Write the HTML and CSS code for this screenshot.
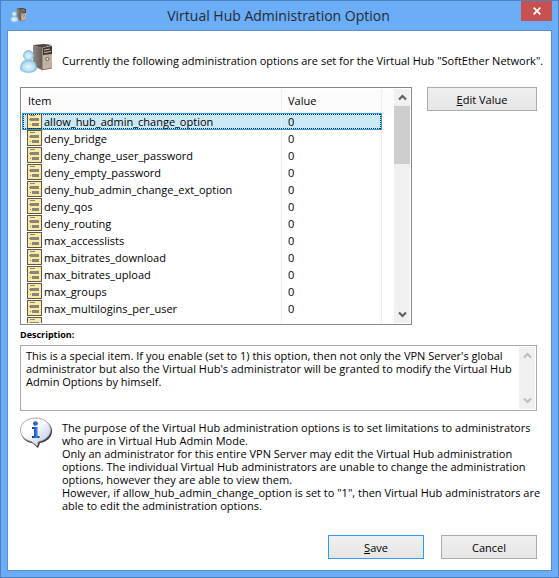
FILE: index.html
```html
<!DOCTYPE html>
<html lang="en">
<head>
  <meta charset="UTF-8">
  <meta name="viewport" content="width=device-width, initial-scale=1.0">
  <title>Virtual Hub Administration Option</title>
  <link rel="stylesheet" href="styles.css">
</head>
<body>
  <!-- shared icons -->
  <svg class="sprite" aria-hidden="true">
    <defs>
      <radialGradient id="person-fill" cx="0.5" cy="0.55" r="0.6">
        <stop offset="0" stop-color="#e2f5fd"/>
        <stop offset="0.5" stop-color="#bfe3f5"/>
        <stop offset="1" stop-color="#7fb9dd"/>
      </radialGradient>
      <linearGradient id="tower-side" x1="0" y1="0" x2="1" y2="0">
        <stop offset="0" stop-color="#948a84"/>
        <stop offset="1" stop-color="#665c57"/>
      </linearGradient>
      <linearGradient id="bubble-fill" x1="0" y1="0" x2="1" y2="1">
        <stop offset="0.4" stop-color="#ffffff"/>
        <stop offset="1" stop-color="#b4bfe8"/>
      </linearGradient>
      <linearGradient id="info-fill" x1="0" y1="0" x2="1" y2="0">
        <stop offset="0" stop-color="#0c2f86"/>
        <stop offset="0.6" stop-color="#2f83e8"/>
        <stop offset="1" stop-color="#0c3c9c"/>
      </linearGradient>
      <symbol id="icon-user-server" viewBox="0 0 32 32">
        <path d="M13 1 L22 4 V26 L13 22 Z" fill="url(#tower-side)"/>
        <path d="M13 1 L24 0 L32 1 L22 4 Z" fill="#4b423e"/>
        <path d="M22 4 L32 1 V24 L22 26 Z" fill="#c3b1a0"/>
        <path d="M23 4 L32 2 V10 L23 11 Z" fill="#3b3430"/>
        <path d="M24 6 L30 5 M24 8.5 L31 7.5" stroke="#c8beb6" stroke-width="1"/>
        <path d="M22 4 V26 L32 24" fill="none" stroke="#6b5c52" stroke-width="0.8"/>
        <circle cx="27.5" cy="15" r="1.6" fill="#eee5da" stroke="#51453d" stroke-width="0.8"/>
        <path d="M0.5 25 C0.500 19 3 16 8.500 16 C14 16 16.500 19 16.500 25 C15.500 29.500 1.500 29.500 0.500 25 Z" fill="url(#person-fill)" stroke="#7ab2d5" stroke-width="0.7"/>
        <circle cx="8.5" cy="11.5" r="5" fill="url(#person-fill)" stroke="#7ab2d5" stroke-width="0.7"/>
      </symbol>
      <symbol id="icon-option" viewBox="0 0 15 17">
        <rect x="0.5" y="0.5" width="14" height="15" fill="#fbeaa6" stroke="#5a574c"/>
        <path d="M3 2h5v1H3z M3 5h9v3H3z M5 10h7v3H5z" fill="#8b8478"/>
        <path d="M2 6h10v1H2z M3 11h1v1H3z" fill="#8b8478"/>
      </symbol>
      <symbol id="icon-up" viewBox="0 0 9 7">
        <path d="M1 5.5 L4.5 2 L8 5.5" fill="none" stroke="currentColor" stroke-width="2.2"/>
      </symbol>
      <symbol id="icon-down" viewBox="0 0 9 7">
        <path d="M1 1.5 L4.5 5 L8 1.5" fill="none" stroke="currentColor" stroke-width="2.2"/>
      </symbol>
    </defs>
  </svg>

  <div class="window">
    <header class="titlebar">
      <svg class="titlebar-icon"><use href="#icon-user-server"/></svg>
      <h1 class="titlebar-text">Virtual Hub Administration Option</h1>
      <button class="close" type="button" aria-label="Close">
        <svg class="close-icon" viewBox="0 0 8 8"><path d="M0.7 0.7 L7.3 7.3 M7.3 0.7 L0.7 7.3" stroke="#fff" stroke-width="1.8"/></svg>
      </button>
    </header>

    <main class="client">
      <div class="intro">
        <svg class="big-icon"><use href="#icon-user-server"/></svg>
        <p>Currently the following administration options are set for the Virtual Hub "SoftEther Network".</p>
      </div>

      <div class="options">
        <div class="listbox">
          <div class="list-view">
            <table class="list">
              <thead>
                <tr><th class="item">Item</th><th class="value">Value</th></tr>
              </thead>
              <tbody>
                <tr class="selected"><td><svg class="row-icon"><use href="#icon-option"/></svg>allow_hub_admin_change_option</td><td>0</td></tr>
                <tr><td><svg class="row-icon"><use href="#icon-option"/></svg>deny_bridge</td><td>0</td></tr>
                <tr><td><svg class="row-icon"><use href="#icon-option"/></svg>deny_change_user_password</td><td>0</td></tr>
                <tr><td><svg class="row-icon"><use href="#icon-option"/></svg>deny_empty_password</td><td>0</td></tr>
                <tr><td><svg class="row-icon"><use href="#icon-option"/></svg>deny_hub_admin_change_ext_option</td><td>0</td></tr>
                <tr><td><svg class="row-icon"><use href="#icon-option"/></svg>deny_qos</td><td>0</td></tr>
                <tr><td><svg class="row-icon"><use href="#icon-option"/></svg>deny_routing</td><td>0</td></tr>
                <tr><td><svg class="row-icon"><use href="#icon-option"/></svg>max_accesslists</td><td>0</td></tr>
                <tr><td><svg class="row-icon"><use href="#icon-option"/></svg>max_bitrates_download</td><td>0</td></tr>
                <tr><td><svg class="row-icon"><use href="#icon-option"/></svg>max_bitrates_upload</td><td>0</td></tr>
                <tr><td><svg class="row-icon"><use href="#icon-option"/></svg>max_groups</td><td>0</td></tr>
                <tr><td><svg class="row-icon"><use href="#icon-option"/></svg>max_multilogins_per_user</td><td>0</td></tr>
                <tr><td><svg class="row-icon"><use href="#icon-option"/></svg></td><td></td></tr>
              </tbody>
            </table>
          </div>
          <div class="scrollbar">
            <svg class="arrow"><use href="#icon-up"/></svg>
            <div class="track"><div class="thumb"></div></div>
            <svg class="arrow"><use href="#icon-down"/></svg>
          </div>
        </div>
        <button class="btn btn-wide" type="button"><span><u>E</u>dit Value</span></button>
      </div>

      <label class="desc-label" for="description">Description:</label>
      <div class="desc-box">
        <textarea class="desc" id="description" readonly>This is a special item. If you enable (set to 1) this option, then not only the VPN Server's global
administrator but also the Virtual Hub's administrator will be granted to modify the Virtual Hub
Admin Options by himself.</textarea>
        <div class="scrollbar disabled">
          <svg class="arrow"><use href="#icon-up"/></svg>
          <div class="track"></div>
          <svg class="arrow"><use href="#icon-down"/></svg>
        </div>
      </div>

      <div class="info">
        <svg class="big-icon" viewBox="0 0 32 32">
          <path d="M16 2 C25 2 32 7 32 14 C32 21 26 25 20 26 L18 31 L12 26 C5 25 1 20 1 14 C1 7 8 2 16 2 Z" fill="#33333d"/>
          <path d="M16 1 C24 1 30.500 6 30.500 13 C30.500 19 25 23.500 18.500 24.500 L17 29 L11.500 24.500 C5 23 0.500 19 0.500 13 C0.500 6 7 1 16 1 Z" fill="url(#bubble-fill)" stroke="#a9a9b0" stroke-width="1"/>
          <circle cx="15.500" cy="6.500" r="2.300" fill="url(#info-fill)"/>
          <path d="M12 10 H17.500 V19 H19.500 V21 H12 V19 H14 V12 H12 Z" fill="url(#info-fill)"/>
        </svg>
        <div class="info-text">
          <p>The purpose of the Virtual Hub administration options is to set limitations to administrators<br>who are in Virtual Hub Admin Mode.</p>
          <p>Only an administrator for this entire VPN Server may edit the Virtual Hub administration<br>options. The individual Virtual Hub administrators are unable to change the administration<br>options, however they are able to view them.<br>However, if allow_hub_admin_change_option is set to "1", then Virtual Hub administrators are<br>able to edit the administration options.</p>
        </div>
      </div>

      <footer class="actions">
        <button class="btn btn-default" type="button"><span><u>S</u>ave</span></button>
        <button class="btn" type="button">Cancel</button>
      </footer>
    </main>
  </div>
</body>
</html>
```

FILE: styles.css
```css
* {
  margin: 0;
  padding: 0;
  box-sizing: border-box;
}

body {
  font-family: "Open Sans", "Noto Sans", sans-serif;
  font-size: 11px;
  line-height: 13px;
  color: #000;
}

.sprite {
  position: absolute;
  width: 0;
  height: 0;
}

.window {
  display: flex;
  flex-direction: column;
  min-height: 100vh;
  padding: 0 6px 6px;
  border: 1px solid #4a82bf;
  background: #6badf6;
}

/* Title bar */
.titlebar {
  display: flex;
  align-items: flex-start;
  height: 29px;
  padding-left: 3px;
}

.titlebar-icon {
  width: 16px;
  height: 16px;
  margin-top: 7px;
}

.titlebar-text {
  flex: 1;
  padding-left: 10px;
  font-size: 14px;
  font-weight: normal;
  line-height: 29px;
  text-align: center;
  color: #262b33;
}

.close {
  display: flex;
  align-items: center;
  justify-content: center;
  width: 31px;
  height: 20px;
  border: 0;
  background: #c75050;
}

.close-icon {
  width: 8px;
  height: 8px;
}

.client {
  display: flex;
  flex: 1;
  flex-direction: column;
  padding: 12px 14px 11px 12px;
  border: 1px solid #5990d0;
  background: #fff;
}

.big-icon {
  flex: none;
  width: 32px;
  height: 32px;
}

.intro {
  display: flex;
  align-items: center;
  gap: 10px;
  height: 34px;
  white-space: nowrap;
}

/* Option list */
.options {
  display: flex;
  align-items: flex-start;
  gap: 15px;
  margin-top: 10px;
}

.listbox {
  display: flex;
  flex: 1;
  height: 238px;
  padding: 1px;
  border: 1px solid #828790;
}

.list-view {
  flex: 1;
  overflow: hidden;
  padding-right: 12px;
  background: linear-gradient(#fcfcfc 24px, #fff 24px);
}

.list {
  width: 100%;
  border-collapse: separate;
  border-spacing: 0;
  table-layout: fixed;
}

.list th {
  height: 24px;
  padding-left: 6px;
  border-right: 1px solid #e5f0fb;
  border-bottom: 1px solid #e5f0fb;
  font-weight: normal;
  text-align: left;
}

.list .value {
  width: 100px;
}

.list td {
  height: 17px;
  padding-left: 6px;
  border-right: 1px solid #e5f0fb;
  line-height: 17px;
  white-space: nowrap;
}

.list td:first-child {
  padding-left: 5px;
}

.row-icon {
  width: 15px;
  height: 17px;
  margin-right: 2px;
  vertical-align: top;
}

.selected {
  position: relative;
  background: #cbe8f6;
}

/* focus rectangle across the whole row */
.selected td:first-child::after {
  content: "";
  position: absolute;
  inset: 0;
  border: 1px solid #26a0da;
  background:
    repeating-linear-gradient(90deg, #222 0 1px, transparent 1px 2px) top / 100% 1px no-repeat,
    repeating-linear-gradient(90deg, #222 0 1px, transparent 1px 2px) bottom / 100% 1px no-repeat,
    repeating-linear-gradient(#222 0 1px, transparent 1px 2px) left / 1px 100% no-repeat,
    repeating-linear-gradient(#222 0 1px, transparent 1px 2px) right / 1px 100% no-repeat;
  background-origin: padding-box;
}

/* Scroll bars */
.scrollbar {
  display: flex;
  flex: none;
  flex-direction: column;
  align-items: center;
  width: 16px;
  padding: 5px 0;
  background: #f0f0f0;
  color: #606060;
}

.arrow {
  width: 9px;
  height: 7px;
}

.track {
  flex: 1;
  width: 100%;
  padding-top: 5px;
}

.thumb {
  height: 58px;
  background: #cdcdcd;
}

.disabled {
  color: #bfbfbf;
}

/* Buttons */
.btn {
  width: 96px;
  height: 24px;
  border: 1px solid #acacac;
  background: linear-gradient(#f0f0f0, #e5e5e5);
  font: inherit;
  color: #000;
}

.btn-wide {
  width: 110px;
}

.btn-default {
  border-color: #3399ff;
}

/* Description */
.desc-label {
  margin-top: 3px;
  font-size: 9px;
  font-weight: bold;
}

.desc-box {
  display: flex;
  height: 66px;
  margin-top: 4px;
  padding: 1px;
  border: 1px solid #ababab;
}

.desc {
  flex: 1;
  min-width: 0;
  padding: 2px 4px;
  border: 0;
  outline: 0;
  overflow: hidden;
  resize: none;
  background: #fff;
  font: inherit;
  color: #000;
  white-space: pre;
}

/* Notes */
.info {
  display: flex;
  gap: 10px;
  margin-top: 6px;
}

.info-text {
  padding-top: 4px;
  white-space: nowrap;
}

.actions {
  display: flex;
  justify-content: flex-end;
  gap: 17px;
  margin-top: auto;
}
```
